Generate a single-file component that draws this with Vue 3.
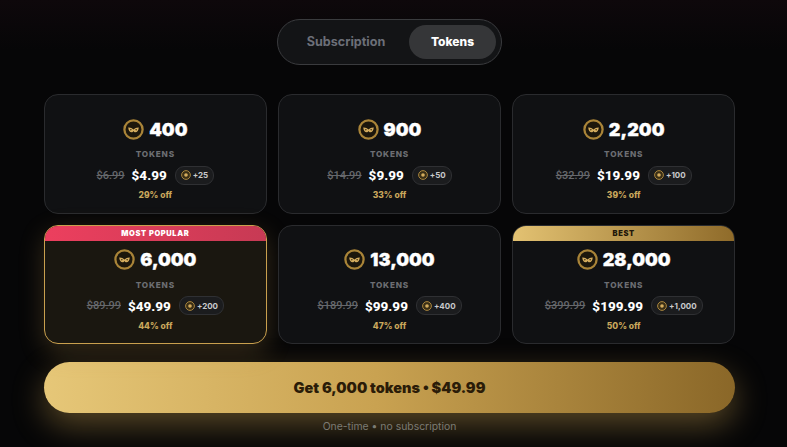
<script setup>
const plans = [
  { n: '400', was: '$6.99', now: '$4.99', bonus: '+25', off: '29% off' },
  { n: '900', was: '$14.99', now: '$9.99', bonus: '+50', off: '33% off' },
  { n: '2,200', was: '$32.99', now: '$19.99', bonus: '+100', off: '39% off' },
  { n: '6,000', was: '$89.99', now: '$49.99', bonus: '+200', off: '44% off', tag: 'MOST POPULAR', kind: 'popular' },
  { n: '13,000', was: '$189.99', now: '$99.99', bonus: '+400', off: '47% off' },
  { n: '28,000', was: '$399.99', now: '$199.99', bonus: '+1,000', off: '50% off', tag: 'BEST', kind: 'best' }
]
</script>

<template>
  <main class="page">
    <div class="toggle">
      <span class="opt">Subscription</span>
      <span class="opt on">Tokens</span>
    </div>
    <section class="grid">
      <article v-for="p in plans" :key="p.n" class="card" :class="p.kind">
        <div v-if="p.tag" class="tag">{{ p.tag }}</div>
        <div class="amount">
          <svg class="coin" viewBox="0 0 24 24">
            <circle cx="12" cy="12" r="10.4" fill="#1c170c" stroke="#a98438" stroke-width="2.6" />
            <path d="M6 9.600c2.400-.2 4.400.7 6 2.400 1.600-1.700 3.600-2.600 6-2.400-.2 3.200-1.700 5.600-3.900 5.600-.9 0-1.600-.6-2.100-1.600-.5 1-1.200 1.600-2.100 1.600-2.200 0-3.700-2.400-3.900-5.600z" fill="#d5ad5e" />
            <path d="M8 11.300l2.300 1-1.700.8zM16 11.300l-2.300 1 1.700.8z" fill="#1c170c" />
          </svg>
          <span class="num">{{ p.n }}</span>
        </div>
        <div class="unit">TOKENS</div>
        <div class="prices">
          <s class="was">{{ p.was }}</s>
          <span class="now">{{ p.now }}</span>
          <span class="bonus">
            <svg class="mini" viewBox="0 0 10 10">
              <circle cx="5" cy="5" r="4.400" fill="#3a2f16" stroke="#a8843e" stroke-width="1" />
              <circle cx="5" cy="5" r="1.800" fill="#d5ad5e" />
            </svg>
            {{ p.bonus }}
          </span>
        </div>
        <div class="off">{{ p.off }}</div>
      </article>
    </section>
    <button class="cta">Get 6,000 tokens • $49.99</button>
    <p class="note">One-time • no subscription</p>
  </main>
</template>

<style>
html, body { margin: 0; background: #060607; }
</style>

<style scoped>
.page {
  box-sizing: border-box;
  width: 787px;
  height: 447px;
  overflow: hidden;
  padding: 19px 52px 0 44px;
  display: flex;
  flex-direction: column;
  align-items: stretch;
  background: linear-gradient(180deg, #0e080b 0, #060607 50px);
  font-family: "Inter", "Liberation Sans", sans-serif;
  color: #fff;
}
.toggle {
  box-sizing: border-box;
  align-self: center;
  width: 225px;
  height: 46px;
  padding: 5px;
  display: flex;
  align-items: center;
  border: 1px solid #3a3b3e;
  border-radius: 23px;
  background: #131416;
}
.opt {
  flex: 1;
  height: 34px;
  line-height: 33px;
  text-align: center;
  font-size: 12.6px;
  font-weight: 700;
  color: #6c6f78;
}
.opt.on {
  flex: 0 0 87px;
  border-radius: 17px;
  background: #353638;
  color: #fff;
  font-size: 12px;
  font-weight: 800;
}
.grid {
  margin-top: 29px;
  display: grid;
  grid-template-columns: repeat(3, 1fr);
  grid-auto-rows: 119.5px;
  gap: 11px 11.5px;
}
.card {
  position: relative;
  box-sizing: border-box;
  padding-top: 22px;
  display: flex;
  flex-direction: column;
  align-items: center;
  border: 1px solid #2a2b2e;
  border-radius: 14px;
  background: #101113;
  overflow: hidden;
}
.card.popular {
  border-color: #c9a04e;
  background: #1a1710;
  box-shadow: 0 8px 26px rgba(201, 160, 78, 0.24);
  overflow: visible;
}
.tag {
  position: absolute;
  top: 0;
  left: 0;
  right: 0;
  height: 15px;
  line-height: 15px;
  text-align: center;
  font-size: 7.5px;
  font-weight: 900;
  letter-spacing: 0.6px;
}
.popular .tag {
  border-radius: 13px 13px 0 0;
  background: linear-gradient(90deg, #ec3f5e, #c73a54);
  color: #fff;
}
.best .tag {
  background: linear-gradient(90deg, #e3c272, #8f6b2a);
  color: #22180a;
}
.amount {
  display: flex;
  align-items: center;
  gap: 5px;
  height: 24px;
}
.coin { width: 21px; height: 21px; }
.num {
  font-size: 18px;
  font-weight: 900;
  -webkit-text-stroke: 0.35px #fff;
}
.unit {
  margin-top: 8px;
  font-size: 8.2px;
  line-height: 11px;
  font-weight: 800;
  letter-spacing: 0.8px;
  color: #6c6e72;
}
.prices {
  margin-top: 6px;
  display: flex;
  align-items: center;
  gap: 7px;
  height: 18px;
  font-family: "Roboto", "Inter", sans-serif;
}
.was { font-size: 11px; font-weight: 500; color: #66686c; }
.now { font-size: 13.5px; font-weight: 800; }
.bonus {
  display: flex;
  align-items: center;
  gap: 2px;
  height: 17px;
  padding: 0 5px;
  margin-left: 1px;
  border: 1px solid #2f3033;
  border-radius: 9px;
  background: #1b1c1e;
  font-family: "Inter", sans-serif;
  font-size: 8px;
  font-weight: 700;
  color: #c9cacc;
}
.mini { width: 10px; height: 10px; }
.off {
  margin-top: 6px;
  font-size: 8.5px;
  line-height: 11px;
  font-weight: 800;
  color: #c9a75c;
}
.cta {
  margin-top: 18px;
  height: 51px;
  flex: none;
  border: 0;
  border-radius: 26px;
  background: linear-gradient(90deg, #e6c778, #c9a251 48%, #8a6728);
  box-shadow: 0 12px 32px rgba(201, 160, 78, 0.42);
  font-family: inherit;
  font-size: 14.5px;
  font-weight: 900;
  color: #2b1c08;
}
.note {
  margin: 7px 0 0;
  text-align: center;
  font-size: 10.4px;
  line-height: 14px;
  color: #7c7b73;
  position: relative;
}
</style>
